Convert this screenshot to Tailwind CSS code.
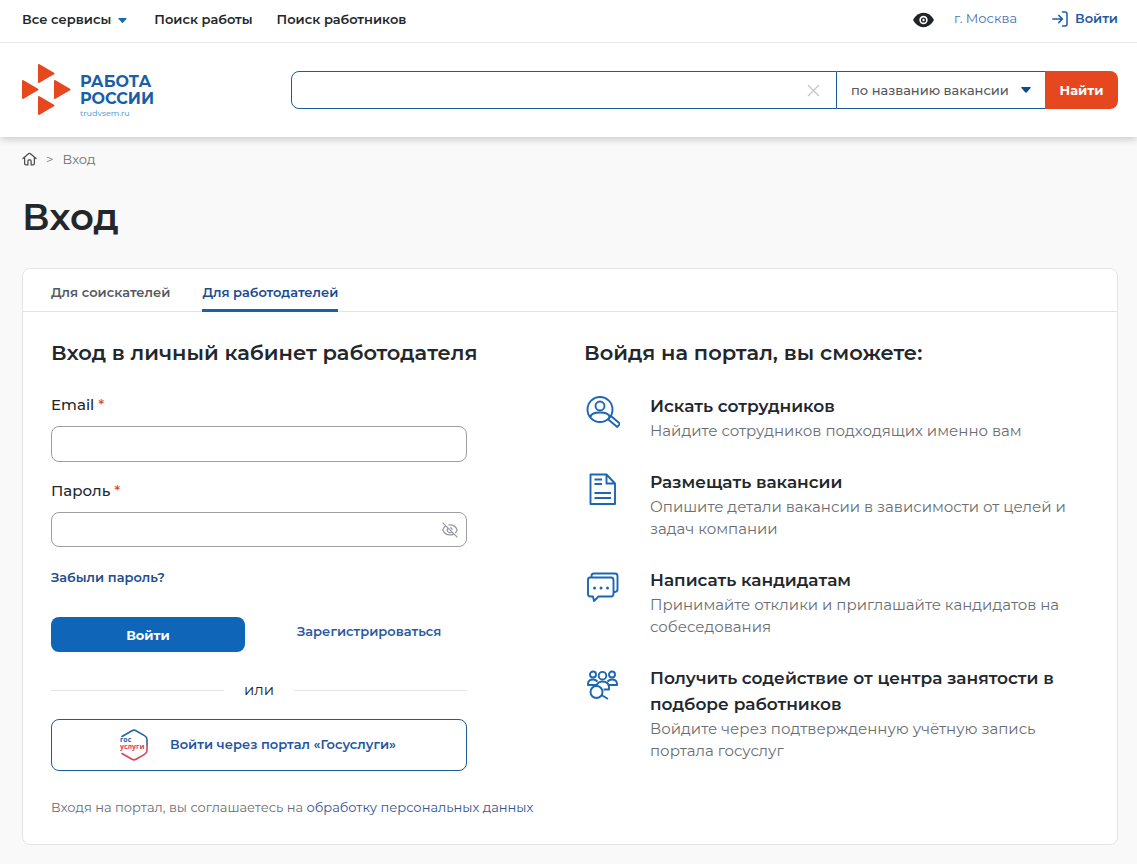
<!DOCTYPE html>
<html lang="ru">
<head>
<meta charset="utf-8">
<meta name="viewport" content="width=device-width, initial-scale=1">
<title>Вход — Работа России</title>
<script src="https://cdn.jsdelivr.net/npm/@tailwindcss/browser@4"></script>
</head>
<body class="min-h-screen bg-[#f9f9f9] font-['Montserrat','Inter',sans-serif] text-[13px] text-[#23272b]">
<header class="bg-white shadow-[0_2px_8px_rgba(0,0,0,0.2)]">
  <div class="flex h-[43px] items-center border-b border-[#e6e7e8] pr-[19px] pb-1 pl-[22px] font-semibold">
    <nav class="flex items-center gap-6 pt-[2px]">
      <button type="button" class="flex items-center gap-[7px] pr-[3px]">Все сервисы
        <svg class="h-[5px] w-[9px]" viewBox="0 0 9 5" fill="#1c69ad"><path d="M.8 0h7.4q.8.2.4.8L5 4.7q-.5.5-1 0L.4.8Q0 .2.8 0z"/></svg>
      </button>
      <a href="#">Поиск работы</a>
      <a href="#">Поиск работников</a>
    </nav>
    <div class="ml-auto flex items-center text-[#1d5ba5]">
      <button type="button" aria-label="Версия для слабовидящих" class="mr-5 pt-[2px]">
        <svg class="h-4 w-[21px]" viewBox="0 0 21 16"><path d="M0 8Q4 .8 10.500.8T21 8q-4 7.200-10.500 7.200T0 8z" fill="#202327"/><circle cx="10.500" cy="8" r="4.200" fill="#fff"/><circle cx="10.500" cy="8" r="2.600" fill="#202327"/><circle cx="10.500" cy="8" r="1.200" fill="#fff"/></svg>
      </button>
      <a href="#" class="mr-[35px] font-normal text-[#4a6fb0]">г. Москва</a>
      <a href="#" class="flex items-center gap-[7px]">
        <svg class="size-4" viewBox="0 0 16 16" fill="none" stroke="#1d5ba5" stroke-width="1.500" stroke-linecap="round" stroke-linejoin="round"><path d="M.8 8h9.500M6.800 4.400 10.400 8l-3.600 3.600M10.500 1H13q2 0 2 2v10q0 2-2 2h-2.500"/></svg>
        Войти
      </a>
    </div>
  </div>
  <div class="flex h-[94px] items-center justify-between pr-[19px] pl-[22px]">
    <a href="#" class="flex items-center gap-[9px]">
      <svg class="h-[52px] w-[49px]" viewBox="0 0 49 52" fill="#e5481f" stroke="#e5481f" stroke-width="2" stroke-linejoin="round"><path d="M17 1v17l14.500-8.500zM1 17v17L15.500 25.500zM33 17v17L47.500 25.500zM17 33v17L31.500 41.500z"/></svg>
      <span class="flex flex-col pt-3 text-base leading-[17px] font-bold text-[#195fa8]">
        <span>РАБОТА</span><span>РОССИИ</span>
        <span class="text-[8px] leading-[12px] font-medium text-[#5fa5dc]">trudvsem.ru</span>
      </span>
    </a>
    <form class="flex h-[38px] w-[827px]">
      <div class="flex min-w-0 flex-1 items-center rounded-l-lg border border-[#1b5c98] pr-4">
        <input type="search" aria-label="Поиск" class="h-full min-w-0 flex-1 px-3 outline-none">
        <button type="reset" aria-label="Очистить"><svg class="size-[13px]" viewBox="0 0 13 13" stroke="#c5c8cb" stroke-width="1.400"><path d="m1 1 11 11M12 1 1 12"/></svg></button>
      </div>
      <div class="relative w-[208px] border-y border-[#1b5c98]">
        <select aria-label="Область поиска" class="h-full w-full appearance-none pt-[2px] pl-[14px] font-medium text-[#55595e] outline-none"><option>по названию вакансии</option></select>
        <svg class="pointer-events-none absolute top-[15px] right-[14px] h-[6px] w-[10px]" viewBox="0 0 10 6" fill="#0d4b91"><path d="M.8 0h8.400q.9.200.4.900L5.600 5.500q-.6.600-1.200 0L.4.900Q-.1.200.8 0z"/></svg>
      </div>
      <button type="submit" class="w-[73px] rounded-r-lg bg-[#e5481f] pt-[2px] font-bold text-white">Найти</button>
    </form>
  </div>
</header>
<main class="pr-[19px] pb-[19px] pl-[22px]">
  <nav aria-label="Навигация" class="flex h-[46px] items-center gap-[9px] text-[#6a6e73]">
    <a href="#" aria-label="Главная" class="pb-[2px]"><svg class="h-[14px] w-[15px]" viewBox="0 0 16 14" fill="none" stroke="#484c50" stroke-width="1.300" stroke-linecap="round" stroke-linejoin="round"><path d="M1 6.500 7.300 1.200q.7-.6 1.400 0L15 6.500M2.800 5.200v6.600q0 1.500 1.500 1.500h2V9q0-1 1-1h1.400q1 0 1 1v4.300h2q1.500 0 1.500-1.500V5.200"/></svg></a>
    <span>&gt;</span>
    <span>Вход</span>
  </nav>
  <h1 class="mt-3 text-[37px] leading-[44px] font-semibold">Вход</h1>
  <section class="mt-[29px] rounded-lg border border-[#e4e5e6] bg-white">
    <div role="tablist" class="flex gap-8 border-b border-[#e4e5e6] px-7 font-semibold">
      <button type="button" role="tab" aria-selected="false" class="h-[42px] pt-[5px] text-[#55595e]">Для соискателей</button>
      <button type="button" role="tab" aria-selected="true" class="-mb-px h-[43px] rounded-t-[2px] border-b-[3px] border-[#1c60a5] pt-[7px] text-[#1b4b91]">Для работодателей</button>
    </div>
    <div class="grid grid-cols-2 gap-7 px-7 pt-7 pb-[27px]">
      <div>
        <h2 class="text-[21px] leading-[26px] font-semibold whitespace-nowrap">Вход в личный кабинет работодателя</h2>
        <form class="max-w-[416px]">
          <label for="email" class="mt-[29px] block text-[15px] leading-5 font-medium">Email <span class="text-[#d9413f]">*</span></label>
          <input id="email" type="email" class="mt-[11px] block h-9 w-full rounded-lg border border-[#9b9da0] px-3 outline-none">
          <label for="password" class="mt-[19px] block text-[15px] leading-5 font-medium">Пароль <span class="text-[#d9413f]">*</span></label>
          <div class="mt-[11px] flex h-[35px] items-center rounded-lg border border-[#9b9da0] pr-2">
            <input id="password" type="password" class="h-full min-w-0 flex-1 px-3 outline-none">
            <button type="button" aria-label="Показать пароль"><svg class="size-4" viewBox="0 0 16 16" fill="none" stroke="#9599a0" stroke-width="1.200"><path d="m.6.600 14.800 14.800M4 3.700Q1.800 5 .8 8q2 4.800 7.200 4.900 2 0 3.600-.8M6.300 3Q13 2.200 15.200 8q-.6 1.800-2 3M5.600 6.300q-1.100 3 1.400 4.100 1.400.5 2.500-.2M8 5.600q2 .1 2.300 2.200"/></svg></button>
          </div>
          <a href="#" class="mt-5 block w-fit leading-5 font-semibold text-[#234d8d]">Забыли пароль?</a>
          <div class="mt-[30px] flex gap-[52px]">
            <button type="submit" class="h-[35px] w-[194px] rounded-lg bg-[#0f65b8] pt-[2px] font-bold text-white">Войти</button>
            <a href="#" class="pt-1 leading-5 font-semibold text-[#2b5b9e]">Зарегистрироваться</a>
          </div>
          <div class="mt-7 flex h-5 items-center gap-5 text-[15px] before:h-px before:flex-1 before:bg-[#e1e3e4] after:h-px after:flex-1 after:bg-[#e1e3e4]">или</div>
          <button type="button" class="mt-[19px] flex h-[52px] w-full items-center justify-center gap-[22px] rounded-lg border border-[#1b5c98] pr-[2px] font-semibold text-[#2455a0]">
            <svg class="h-8 w-7" viewBox="0 0 28 32" fill="none" stroke-width="1.600" stroke-linecap="round"><path d="M2 7.500 12 1.700q2-1.100 4 0l8.500 4.900Q27 8 27 10.500V16" stroke="#2862a3"/><path d="M27 16v5.500q0 2.500-2.500 3.900L16 30.300q-2 1.100-4 0L2 24.500" stroke="#db4257"/><text x="0" y="13" fill="#2862a3" font-family="Open Sans" font-size="7" font-weight="700">гос</text><text x="0" y="20" fill="#db4257" font-family="Open Sans" font-size="7" font-weight="700">услуги</text></svg>
            Войти через портал «Госуслуги»
          </button>
        </form>
        <p class="mt-[26px] leading-5 whitespace-nowrap text-[#6a6e73]">Входя на портал, вы соглашаетесь на <a href="#" class="text-[#36548e]">обработку персональных данных</a></p>
      </div>
      <div>
        <h2 class="text-[21px] leading-[26px] font-semibold">Войдя на портал, вы сможете:</h2>
        <ul class="mt-[27px] flex flex-col gap-[27px]">
          <li class="flex gap-[30px]">
            <svg class="mt-[3px] size-9 shrink-0" viewBox="-1 0 36 36" fill="none" stroke="#1c66b3" stroke-width="1.900" stroke-linejoin="round"><circle cx="15" cy="13.500" r="12.500"/><circle cx="15" cy="10" r="4.500"/><path d="M5.500 21.500q0-5 9.500-5t9.500 5M24 22l2-2 9 7.800-2.700 3.200-9-7.600z"/></svg>
            <div><h3 class="text-[17px] leading-[26px] font-semibold">Искать сотрудников</h3><p class="mt-px text-[15px] leading-[22px] text-[#6a6e73]">Найдите сотрудников подходящих именно вам</p></div>
          </li>
          <li class="flex gap-[30px]">
            <svg class="mt-[3px] size-9 shrink-0" viewBox="-1 0 36 36" fill="none" stroke="#1c66b3" stroke-width="1.900" stroke-linejoin="round"><path d="M5.500 2.500h16l8.500 9v20.500H5.500zM21.500 2.500v9H30M9.500 7.500h7.500M9.500 12h7.500M9.500 21h16.500M9.500 26h16.500"/></svg>
            <div><h3 class="text-[17px] leading-[26px] font-semibold">Размещать вакансии</h3><p class="mt-px text-[15px] leading-[22px] text-[#6a6e73]">Опишите детали вакансии в зависимости от целей и задач компании</p></div>
          </li>
          <li class="flex gap-[30px]">
            <svg class="mt-[3px] size-9 shrink-0" viewBox="-1 0 36 36" fill="none" stroke="#1c66b3" stroke-width="1.900" stroke-linejoin="round"><path d="M6.500 7.500V6Q6.500 3.500 9 3.500h21q2.500 0 2.500 2.500v13.500q0 2.500-3.500 2.500M5 7.500h21q2.500 0 2.500 2.500v14q0 2.500-2.500 2.500H13.500L9 31l-1-4.500H5.500Q3 26.500 3 24V10q0-2.500 2-2.500z"/><g fill="#1c66b3" stroke="none"><circle cx="9.500" cy="18" r="1.500"/><circle cx="16" cy="18" r="1.500"/><circle cx="22.500" cy="18" r="1.500"/></g></svg>
            <div><h3 class="text-[17px] leading-[26px] font-semibold">Написать кандидатам</h3><p class="mt-px text-[15px] leading-[22px] text-[#6a6e73]">Принимайте отклики и приглашайте кандидатов на собеседования</p></div>
          </li>
          <li class="flex gap-[30px]">
            <svg class="mt-[3px] size-9 shrink-0" viewBox="-1 0 36 36" fill="none" stroke="#1c66b3" stroke-width="1.900" stroke-linejoin="round"><circle cx="8" cy="6.500" r="3"/><circle cx="17.500" cy="7.700" r="3.800"/><circle cx="27" cy="6.500" r="3"/><path d="M12.500 17H3v-1.500q.5-4 5-4 2.500 0 4.500 2M22.500 13.500q2-2 4.500-2 4.500 0 5 4V17h-9.500M12 16.500q1.500-3 5.500-3 6 0 6.500 5.500v2.500h-5.500"/><circle cx="11.500" cy="24" r="6"/><path d="m16.500 27 6.500 4"/></svg>
            <div><h3 class="text-[17px] leading-[26px] font-semibold">Получить содействие от центра занятости в подборе работников</h3><p class="mt-px text-[15px] leading-[22px] text-[#6a6e73]">Войдите через подтвержденную учётную запись портала госуслуг</p></div>
          </li>
        </ul>
      </div>
    </div>
  </section>
</main>
</body>
</html>
